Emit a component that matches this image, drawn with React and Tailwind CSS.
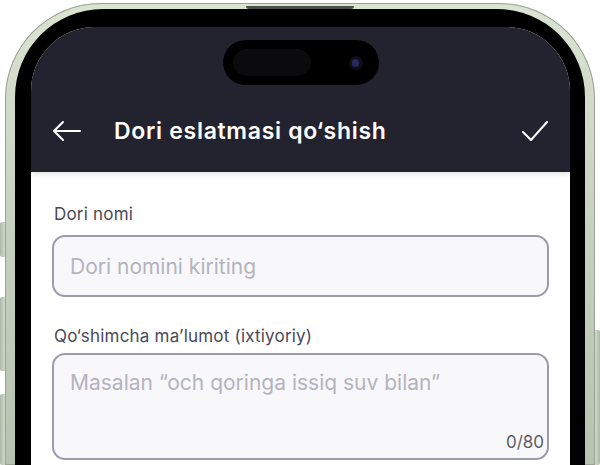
export default function App() {
  return (
    <div className="flex w-[600px] h-[465px] overflow-hidden bg-white" style={{ fontFamily: 'Inter, "Noto Sans", sans-serif' }}>
      {/* left side buttons */}
      <div className="flex flex-col w-[5px] shrink-0 pt-[222px]">
        <div className="h-[40px] rounded-l-[2px] bg-gradient-to-r from-[#aeb8a8] to-[#d2dbcb]" />
        <div className="mt-[40px] h-[83px] rounded-l-[2px] bg-gradient-to-r from-[#aeb8a8] to-[#d2dbcb]" />
        <div className="mt-[23px] h-[80px] rounded-l-[2px] bg-gradient-to-r from-[#aeb8a8] to-[#d2dbcb]" />
      </div>

      {/* phone */}
      <div className="flex-1 mt-[3px] rounded-t-[96px] bg-gradient-to-b from-[#dbe3d3] via-[#c6d0bf] to-[#b7c2b0] px-[10px] pt-[3px] shadow-[inset_0_0_0_1px_#9aa393]">
        <div className="mx-auto w-[108px] h-[3px] rounded-b-full bg-[#4b5048]" />
        <div className="rounded-t-[88px] bg-black px-[15px] pt-[18px] pl-[16px]">
          <div className="h-[460px] rounded-t-[64px] overflow-hidden bg-white">
            <header className="relative z-10 h-[145px] bg-[#23222f] flex flex-col shadow-[0_2px_5px_rgba(0,0,0,0.12)]">
              <div className="mt-[13px] mx-auto w-[156px] h-[45px] rounded-full bg-black flex items-center pl-[10px] pr-[16px]">
                <div className="w-[78px] h-[27px] rounded-full bg-[#0b0a0c]" />
                <div className="ml-auto w-[14px] h-[14px] rounded-full bg-[#0f0d1a] flex items-center justify-center">
                  <div className="w-[7px] h-[8px] rounded-full bg-[#23295a]" />
                </div>
              </div>
              <div className="flex items-center h-[48px] mt-[22px] px-[21px]">
                <svg width="30" height="22" viewBox="0 0 30 22" fill="none" stroke="white" strokeWidth="2" strokeLinecap="round" strokeLinejoin="round">
                  <path d="M2 11h26M11 2l-9 9 9 9" />
                </svg>
                <h1 className="ml-[32px] text-[23px] font-semibold text-white tracking-[0.7px]">Dori eslatmasi qo‘shish</h1>
                <svg className="ml-auto" width="28" height="22" viewBox="0 0 28 22" fill="none" stroke="white" strokeWidth="2" strokeLinecap="round" strokeLinejoin="round">
                  <path d="M2 12l8 8L26 2" />
                </svg>
              </div>
            </header>

            <div className="flex flex-col px-[21px] pt-[31px]">
              <label className="pl-[2px] text-[17px] leading-[22px] tracking-[0.2px] text-[#4a4959]">Dori nomi</label>
              <input
                placeholder="Dori nomini kiriting"
                className="mt-[10px] w-full h-[62px] rounded-[13px] border-2 border-[#9c9baa] bg-[#f8f8fa] px-[16px] text-[21px] text-[#2a2935] placeholder:text-[#b4b3c0] outline-none"
              />
              <label className="mt-[28px] pl-[2px] text-[17px] leading-[22px] tracking-[0.2px] text-[#4a4959]">Qo‘shimcha ma’lumot (ixtiyoriy)</label>
              <div className="flex flex-col mt-[6px] h-[107px] rounded-[13px] border-2 border-[#9c9baa] bg-[#f8f8fa] pr-[3px] pb-[5px]">
                <textarea
                  placeholder="Masalan “och qoringa issiq suv bilan”"
                  className="flex-1 min-h-0 w-full resize-none bg-transparent px-[16px] pt-[14px] text-[21px] leading-[28px] text-[#2a2935] placeholder:text-[#b4b3c0] outline-none"
                />
                <span className="self-end text-[17px] leading-[22px] text-[#5d5c6c]">0/80</span>
              </div>
            </div>
          </div>
        </div>
      </div>

      {/* right side button */}
      <div className="flex flex-col w-[5px] shrink-0 pt-[330px]">
        <div className="h-[160px] rounded-r-[2px] bg-gradient-to-l from-[#aeb8a8] to-[#d2dbcb]" />
      </div>
    </div>
  )
}
